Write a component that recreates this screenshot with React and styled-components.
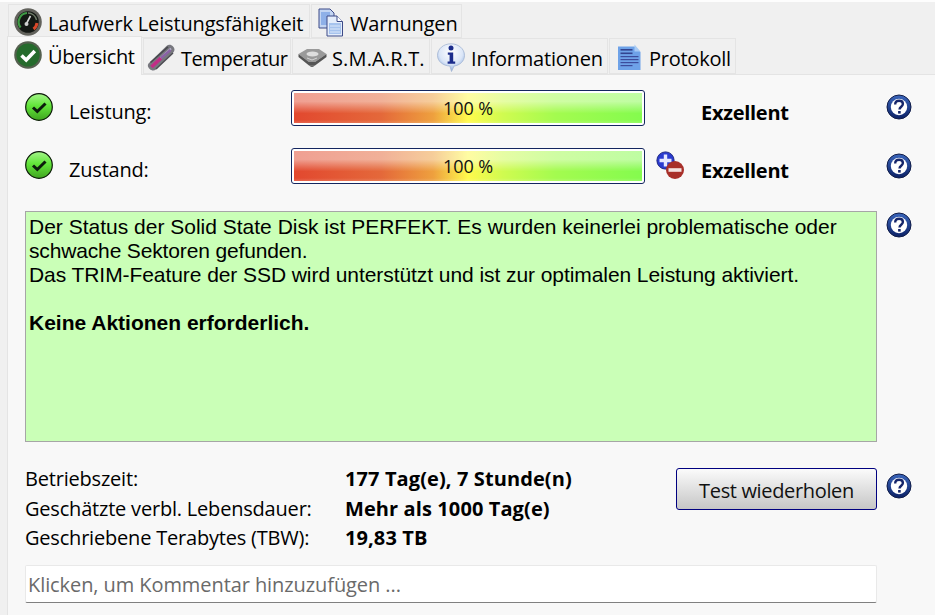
import React from 'react'
import styled, { createGlobalStyle } from 'styled-components'

const GlobalStyle = createGlobalStyle`
html, body {
    margin: 0;
    padding: 0;
    height: 100%;
    background: #f0f0f0;
}
* { box-sizing: border-box; }
`

const uiFont = `"Open Sans", "Noto Sans", sans-serif`

const Page = styled.div`
width: 935px;
height: 615px;
overflow: hidden;
background: #f0f0f0;
border-top: 2px solid #fdfdfd;
font-family: ${uiFont};
font-size: 20px;
color: #000;
`

const TabRow = styled.div`
display: flex;
height: ${props => props.$h}px;
margin-left: ${props => props.$left}px;
padding-top: ${props => props.$top}px;
`

const Tab = styled.div`
position: relative;
z-index: ${props => props.$active ? 2 : 1};
display: flex;
align-items: center;
flex: none;
width: ${props => props.$w}px;
margin-right: 1px;
margin-top: ${props => props.$active ? -2 : 0}px;
margin-bottom: ${props => props.$active ? -1 : 0}px;
padding-left: ${props => props.$pad}px;
padding-top: ${props => props.$active ? 0 : 2}px;
padding-bottom: ${props => props.$active ? 3 : 0}px;
gap: ${props => props.$gap}px;
background: ${props => props.$active ? '#f8f8f8' : '#f0f0f0'};
border: 1px solid #e4e4e4;
border-bottom: ${props => props.$active ? 'none' : '1px solid #e4e4e4'};
white-space: nowrap;
`

const TabLabel = styled.span`
padding-top: ${props => props.$shift || 2}px;
letter-spacing: ${props => props.$ls ?? -0.15}px;
`

const Panel = styled.div`
position: relative;
margin-left: 7px;
height: 541px;
padding: 15px 0 0 17px;
background: #f8f8f8;
border-top: 1px solid #e4e4e4;
border-left: 1px solid #e4e4e4;
`

const StatusRow = styled.div`
display: grid;
grid-template-columns: 44px 222px 354px 56px 185px 26px;
height: 36px;
margin-bottom: ${props => props.$mb}px;
`

const CheckCell = styled.div`
padding-top: 3px;
`

const Label = styled.div`
padding-top: 8px;
line-height: 28px;
letter-spacing: -0.2px;
`

const Bar = styled.div`
height: 36px;
border: 1px solid #14265f;
border-radius: 3px;
background: #fff;
padding: 2px;
`

const BarFill = styled.div`
display: flex;
align-items: center;
justify-content: center;
height: 100%;
padding-bottom: 1px;
font-size: 18px;
letter-spacing: -0.1px;
color: #111;
background:
    linear-gradient(
    to bottom,
    rgba(255, 255, 255, 0.48) 0,
    rgba(255, 255, 255, 0.48) 28%,
    rgba(255, 255, 255, 0) 68%,
    rgba(255, 255, 255, 0) 90%,
    rgba(255, 255, 255, 0.15) 100%),
    linear-gradient(
    to right,
    #e2482f 0,
    #e4683a 25%,
    #eea03e 40%,
    #fffa4d 50%,
    #d0fb50 60%,
    #a4fb4f 75%,
    #84fb4e 100%);
`

const ExtraCell = styled.div`
padding: 3px 0 0 11px;
`

const Rating = styled.div`
padding-top: 9px;
line-height: 28px;
font-weight: 700;
letter-spacing: -0.28px;
`

const HelpCell = styled.div`
padding-top: ${props => props.$top}px;
`

const MessageRow = styled.div`
display: flex;
align-items: flex-start;
gap: 9px;
height: 231px;
`

const Message = styled.div`
flex: none;
width: 852px;
height: 231px;
padding: 3px 3px;
background: #caffb7;
border: 1px solid #a6a6a6;
font-family: "Liberation Sans", Arial, sans-serif;
font-size: 21px;
line-height: 24px;
white-space: nowrap;
color: #000;
`

const MessageLine = styled.div`
letter-spacing: ${props => props.$ls || 0}px;
`

const StrongLine = styled.div`
margin-top: 24px;
font-weight: 700;
`

const MessageHelp = styled.div`
margin-top: 1px;
`

const StatsRow = styled.div`
display: flex;
align-items: flex-start;
margin-top: 26px;
height: 97px;
`

const Stats = styled.div`
flex: none;
width: 651px;
display: grid;
grid-template-columns: 320px auto;
grid-auto-rows: 29.5px;
margin-top: -4px;
line-height: 29.5px;
letter-spacing: -0.2px;
`

const StatValue = styled.div`
font-weight: 700;
letter-spacing: 0.1px;
`

const RetestButton = styled.button`
flex: none;
width: 201px;
height: 42px;
padding: 2px 0 0;
border: 1px solid #000080;
border-radius: 3px;
background: linear-gradient(to bottom, #fbfbfb, #c6c6c6);
font-family: ${uiFont};
font-size: 20px;
letter-spacing: -0.35px;
color: #111;
`

const ButtonHelp = styled.div`
margin: 5px 0 0 9px;
`

const CommentField = styled.div`
width: 852px;
height: 38px;
padding-left: 2px;
line-height: 38px;
background: #fff;
border: 1px solid #e9e9e9;
border-bottom: 1px solid #808080;
border-radius: 2px;
color: #6a6a6a;
letter-spacing: -0.08px;
`

const IconBox = styled.svg`
display: block;
flex: none;
`

const HelpIcon = () => (
    <IconBox width="26" height="26" viewBox="0 0 26 26">
        <defs>
            <linearGradient id="helpRing" x1="0" y1="0" x2="0" y2="1">
                <stop offset="0" stopColor="#3a66bc" />
                <stop offset="1" stopColor="#0c2166" />
            </linearGradient>
        </defs>
        <circle cx="13" cy="13" r="12" fill="url(#helpRing)" stroke="#101c48" strokeWidth="1" />
        <circle cx="13" cy="13" r="8.2" fill="#fff" />
        <path d="M9.2 10.4c0-2.2 1.6-3.6 3.9-3.6s3.8 1.3 3.8 3.2c0 2.7-3.4 2.7-3.4 5.4" fill="none" stroke="#15256a" strokeWidth="2.4" />
        <rect x="12.1" y="17" width="2.6" height="2.6" fill="#15256a" />
    </IconBox>
)

const GreenCheck = () => (
    <IconBox width="29" height="29" viewBox="0 0 29 29">
        <defs>
            <linearGradient id="greenBall" x1="0" y1="0" x2="0" y2="1">
                <stop offset="0" stopColor="#a4f58a" />
                <stop offset="0.45" stopColor="#62e53a" />
                <stop offset="1" stopColor="#3fa41f" />
            </linearGradient>
        </defs>
        <circle cx="14" cy="14" r="13.3" fill="url(#greenBall)" stroke="#0b1a08" strokeWidth="1.2" />
        <path d="M8 14.5l4.3 4L20.5 10.5" fill="none" stroke="#0c1c0c" strokeWidth="3" />
    </IconBox>
)

const GaugeIcon = () => (
    <IconBox width="28" height="28" viewBox="0 0 28 28">
        <circle cx="14" cy="14" r="13.8" fill="#62625c" />
        <circle cx="14" cy="14" r="10.8" fill="#141814" />
        <path d="M6.6 19.5A9 9 0 0 1 13 5" fill="none" stroke="#3f9a45" strokeWidth="2.2" />
        <path d="M14 5A9 9 0 0 1 22.6 12" fill="none" stroke="#6f7c68" strokeWidth="1.4" />
        <path d="M23 15A9 9 0 0 1 19.5 21" fill="none" stroke="#d8482a" strokeWidth="3" />
        <path d="M12.5 15.5L16.5 8" stroke="#d8d8d8" strokeWidth="1.6" />
        <circle cx="12.5" cy="16" r="2" fill="#cfcfcf" />
    </IconBox>
)

const TabCheckIcon = () => (
    <IconBox width="28" height="28" viewBox="0 0 28 28">
        <circle cx="14" cy="14" r="13.8" fill="#55604f" />
        <circle cx="14" cy="14" r="11.6" fill="#256b2c" />
        <path d="M7.5 14.5l4.7 4.5 8.6-9" fill="none" stroke="#fff" strokeWidth="3.6" />
    </IconBox>
)

const ThermoIcon = () => (
    <IconBox width="30" height="28" viewBox="0 0 30 28">
        <path d="M2.5 20.5L20.5 3c2-1.8 4.8-1.4 6.6.4s1.8 4 .4 5.8L10 26.6c-1.9 1.6-4.6 1.2-6.3-.5S1.2 22.4 2.5 20.5z" fill="#77777e" />
        <path d="M4.5 19.5L22 3.8" stroke="#48484e" strokeWidth="1.6" />
        <path d="M6.5 22.5L25 5.5" stroke="#b4b0c4" strokeWidth="2" />
        <path d="M5.5 24L15 15" stroke="#c22c86" strokeWidth="3.6" />
        <path d="M15 15L24.5 7" stroke="#8a62a6" strokeWidth="2.4" />
        <path d="M10 26L27 10" stroke="#4c4c52" strokeWidth="1.4" />
    </IconBox>
)

const DocsIcon = () => (
    <IconBox width="26" height="29" viewBox="0 0 26 29">
        <path d="M1 1h11l4 4v15H1z" fill="#c3d5f2" stroke="#3c4a88" />
        <rect x="3" y="4" width="9" height="13" fill="#8eb0e8" />
        <path d="M9 8h10l5.5 5.5V28H9z" fill="#e4edfb" stroke="#3c4a88" />
        <path d="M19 8v5.5h5.5" fill="#fff" stroke="#3c4a88" />
        <rect x="11" y="15" width="12" height="11" fill="#a6c3ee" />
        <path d="M12 18h10M12 21h10M12 24h10" stroke="#dce8fa" />
    </IconBox>
)

const DiskIcon = () => (
    <IconBox width="29" height="20" viewBox="0 0 29 20">
        <path d="M0.5 7L9 2h12l7.5 5L17 15H11z" fill="#9a9a9a" />
        <path d="M0.5 7L11 15h6l11.5-8v3L17 18.5h-6L0.5 10z" fill="#555" />
        <ellipse cx="14.5" cy="7" rx="6" ry="2.6" fill="#dedede" />
        <path d="M9 11l5 2 5-2" fill="none" stroke="#d4d4d4" />
        <path d="M11 18.5h6l-2 1.2h-2z" fill="#3e3e3e" />
    </IconBox>
)

const InfoIcon = () => (
    <IconBox width="28" height="29" viewBox="0 0 28 29">
        <defs>
            <radialGradient id="infoBall" cx="0.5" cy="0.3" r="0.72">
                <stop offset="0" stopColor="#ffffff" />
                <stop offset="0.6" stopColor="#dbe6f7" />
                <stop offset="1" stopColor="#7fa3dc" />
            </radialGradient>
        </defs>
        <path d="M14 0.8C21.5 0.8 27.5 5.8 27.5 12.4c0 6-5 10-10.4 10.6L14.5 28.5l-1.6-5.5C6.2 22.8 0.5 18.4 0.5 12.4 0.5 5.8 6.5 0.8 14 0.8z" fill="url(#infoBall)" stroke="#a3b5d2" strokeWidth="0.8" />
        <circle cx="14" cy="5" r="2.5" fill="#1b2c8c" />
        <path d="M10.8 9.5h5.4v9h2v2.2h-7.6v-2.2h2v-6.8h-1.8z" fill="#1b2c8c" />
    </IconBox>
)

const LogIcon = () => (
    <IconBox width="25" height="27" viewBox="0 0 25 27">
        <path d="M1 2.5h16.5l6 5.5v18H1z" fill="#6ea2e8" />
        <path d="M17.5 0.5l6 7h-6z" fill="#a8cbf5" />
        <rect x="3.5" y="5" width="12" height="1.6" fill="#33448f" />
        <rect x="3.5" y="8.5" width="12" height="1.6" fill="#33448f" />
        <rect x="3.5" y="12" width="18" height="1.2" fill="#3c4c9c" />
        <rect x="3.5" y="15" width="18" height="1.2" fill="#3c4c9c" />
        <rect x="3.5" y="18" width="18" height="1.2" fill="#3c4c9c" />
        <rect x="3.5" y="21" width="12" height="1.2" fill="#3c4c9c" />
    </IconBox>
)

const PlusMinusIcon = () => (
    <IconBox width="29" height="29" viewBox="0 0 29 29">
        <circle cx="9.5" cy="9.5" r="8.6" fill="#2a3bd0" stroke="#1a2380" />
        <path d="M9.5 3.5v12M3.5 9.5h12" stroke="#e6e8ff" strokeWidth="3.4" />
        <circle cx="19" cy="19" r="9" fill="#a8302a" />
        <rect x="12.5" y="17.2" width="13" height="3.6" fill="#f3e4e2" />
    </IconBox>
)

const App = () => {
    return (
        <Page>
            <GlobalStyle />
            <TabRow $h={36} $left={8} $top={2}>
                <Tab $w={302} $pad={5} $gap={6}><GaugeIcon /><TabLabel>Laufwerk Leistungsfähigkeit</TabLabel></Tab>
                <Tab $w={151} $pad={6} $gap={6}><DocsIcon /><TabLabel>Warnungen</TabLabel></Tab>
            </TabRow>
            <TabRow $h={36} $left={7} $top={0}>
                <Tab $w={135} $active $pad={6} $gap={6}><TabCheckIcon /><TabLabel $shift={4} $ls={-0.35}>Übersicht</TabLabel></Tab>
                <Tab $w={148} $pad={2} $gap={5}><ThermoIcon /><TabLabel $ls={-0.45}>Temperatur</TabLabel></Tab>
                <Tab $w={138} $pad={5} $gap={5}><DiskIcon /><TabLabel $ls={0.15}>S.M.A.R.T.</TabLabel></Tab>
                <Tab $w={177} $pad={5} $gap={6}><InfoIcon /><TabLabel $ls={-0.2}>Informationen</TabLabel></Tab>
                <Tab $w={127} $pad={7} $gap={7}><LogIcon /><TabLabel $ls={-0.25}>Protokoll</TabLabel></Tab>
            </TabRow>
            <Panel>
                <StatusRow $mb={22}>
                    <CheckCell><GreenCheck /></CheckCell>
                    <Label>Leistung:</Label>
                    <Bar><BarFill>100 %</BarFill></Bar>
                    <span />
                    <Rating>Exzellent</Rating>
                    <HelpCell $top={4}><HelpIcon /></HelpCell>
                </StatusRow>
                <StatusRow $mb={27}>
                    <CheckCell><GreenCheck /></CheckCell>
                    <Label>Zustand:</Label>
                    <Bar><BarFill>100 %</BarFill></Bar>
                    <ExtraCell><PlusMinusIcon /></ExtraCell>
                    <Rating>Exzellent</Rating>
                    <HelpCell $top={5}><HelpIcon /></HelpCell>
                </StatusRow>
                <MessageRow>
                    <Message>
                        <MessageLine>Der Status der Solid State Disk ist PERFEKT. Es wurden keinerlei problematische oder</MessageLine>
                        <MessageLine $ls={-0.15}>schwache Sektoren gefunden.</MessageLine>
                        <MessageLine $ls={-0.07}>Das TRIM-Feature der SSD wird unterstützt und ist zur optimalen Leistung aktiviert.</MessageLine>
                        <StrongLine>Keine Aktionen erforderlich.</StrongLine>
                    </Message>
                    <MessageHelp><HelpIcon /></MessageHelp>
                </MessageRow>
                <StatsRow>
                    <Stats>
                        <div>Betriebszeit:</div>
                        <StatValue>177 Tag(e), 7 Stunde(n)</StatValue>
                        <div>Geschätzte verbl. Lebensdauer:</div>
                        <StatValue>Mehr als 1000 Tag(e)</StatValue>
                        <div>Geschriebene Terabytes (TBW):</div>
                        <StatValue>19,83 TB</StatValue>
                    </Stats>
                    <RetestButton>Test wiederholen</RetestButton>
                    <ButtonHelp><HelpIcon /></ButtonHelp>
                </StatsRow>
                <CommentField>Klicken, um Kommentar hinzuzufügen ...</CommentField>
            </Panel>
        </Page>
    )
}

export default App
